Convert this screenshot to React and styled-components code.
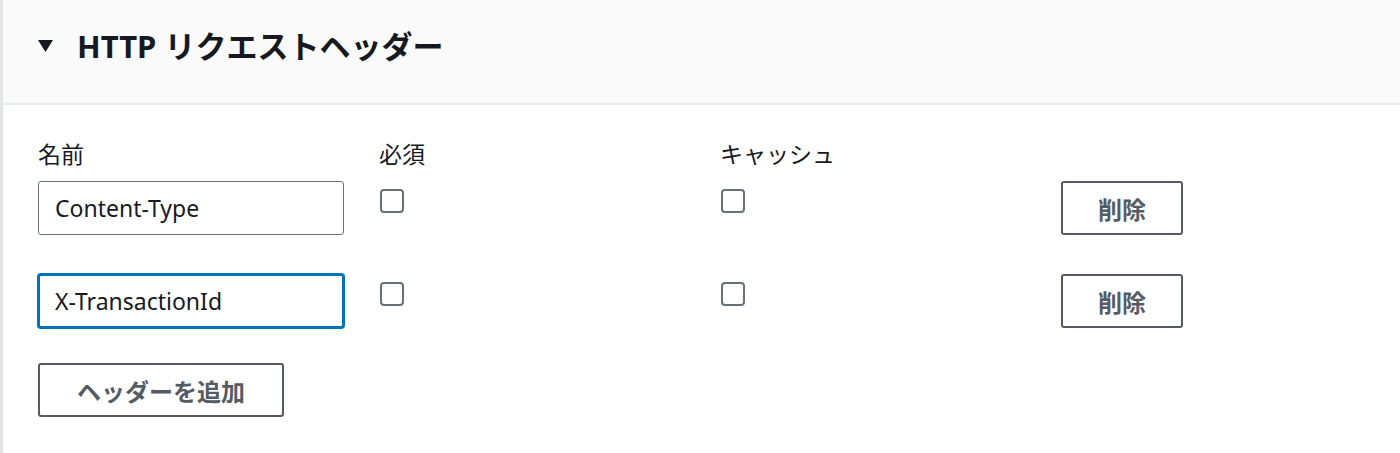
import React from "react";
import styled, { createGlobalStyle } from "styled-components";

const Global = createGlobalStyle`
  html, body { margin: 0; padding: 0; background: #ffffff; }
  body { font-family: "Noto Sans", "Noto Sans CJK JP", sans-serif; color: #16191f; }
  * { box-sizing: border-box; }
`;

const Panel = styled.section`
  width: 1400px;
  height: 453px;
  border-left: 3px solid #e4e6e6;
  background: #ffffff;
`;

const Header = styled.header`
  height: 105px;
  background: #fafafa;
  border-bottom: 2px solid #eaeded;
  display: flex;
  align-items: flex-start;
  gap: 24px;
  padding: 27px 35px 0;
`;

const Caret = styled.svg`
  width: 15px;
  height: 12px;
  margin-top: 13px;
  flex: none;
`;

const Title = styled.h2`
  margin: 0;
  font-family: "Noto Sans", "Noto Sans CJK JP", sans-serif;
  font-size: 31px;
  line-height: 38px;
  font-weight: 700;
  color: #16191f;
`;

const Body = styled.div`
  padding: 34px 35px 0;
`;

const Grid = styled.div`
  display: grid;
  grid-template-columns: 306px 306px 306px 306px;
  column-gap: 35px;
  align-items: start;
`;

const Label = styled.div`
  font-size: 23px;
  line-height: 30px;
  color: #16191f;
  margin-bottom: 12px;
`;

const Row = styled(Grid)`
  margin-bottom: 39px;
`;

const Input = styled.div`
  height: 54px;
  width: 306px;
  border: ${(p) => (p.$focused ? "2px solid #0073bb" : "1px solid #687078")};
  border-radius: 3px;
  box-shadow: ${(p) => (p.$focused ? "0 0 0 1px #0073bb" : "none")};
  display: flex;
  align-items: center;
  padding: 0 ${(p) => (p.$focused ? "15px" : "16px")};
  font-size: 23px;
  color: #16191f;
  background: #fff;
`;

const Check = styled.span`
  display: block;
  width: 24px;
  height: 24px;
  margin-top: 8px;
  margin-left: 1px;
  border: 2px solid #687078;
  border-radius: 4px;
  background: #fff;
`;

const Button = styled.button`
  height: 54px;
  padding: 0 ${(p) => (p.$wide ? "37px" : "35px")};
  border: 2px solid #545b64;
  border-radius: 3px;
  background: #fff;
  color: #545b64;
  font-family: "Noto Sans", "Noto Sans CJK JP", sans-serif;
  font-size: 24px;
  font-weight: 700;
  justify-self: start;
  cursor: pointer;
`;

const AddButton = styled(Button)`
  margin-top: -4px;
`;

const rows = [
  { name: "Content-Type", focused: false },
  { name: "X-TransactionId", focused: true },
];

export default function App() {
  return (
    <>
      <Global />
      <Panel>
        <Header>
          <Caret viewBox="0 0 15 12">
            <path d="M0 0 H15 L7.5 12 Z" fill="#16191f" />
          </Caret>
          <Title>HTTP リクエストヘッダー</Title>
        </Header>
        <Body>
          <Grid>
            <Label>名前</Label>
            <Label>必須</Label>
            <Label>キャッシュ</Label>
            <div />
          </Grid>
          {rows.map((r) => (
            <Row key={r.name}>
              <Input $focused={r.focused}>{r.name}</Input>
              <Check />
              <Check />
              <Button>削除</Button>
            </Row>
          ))}
          <AddButton $wide>ヘッダーを追加</AddButton>
        </Body>
      </Panel>
    </>
  );
}
